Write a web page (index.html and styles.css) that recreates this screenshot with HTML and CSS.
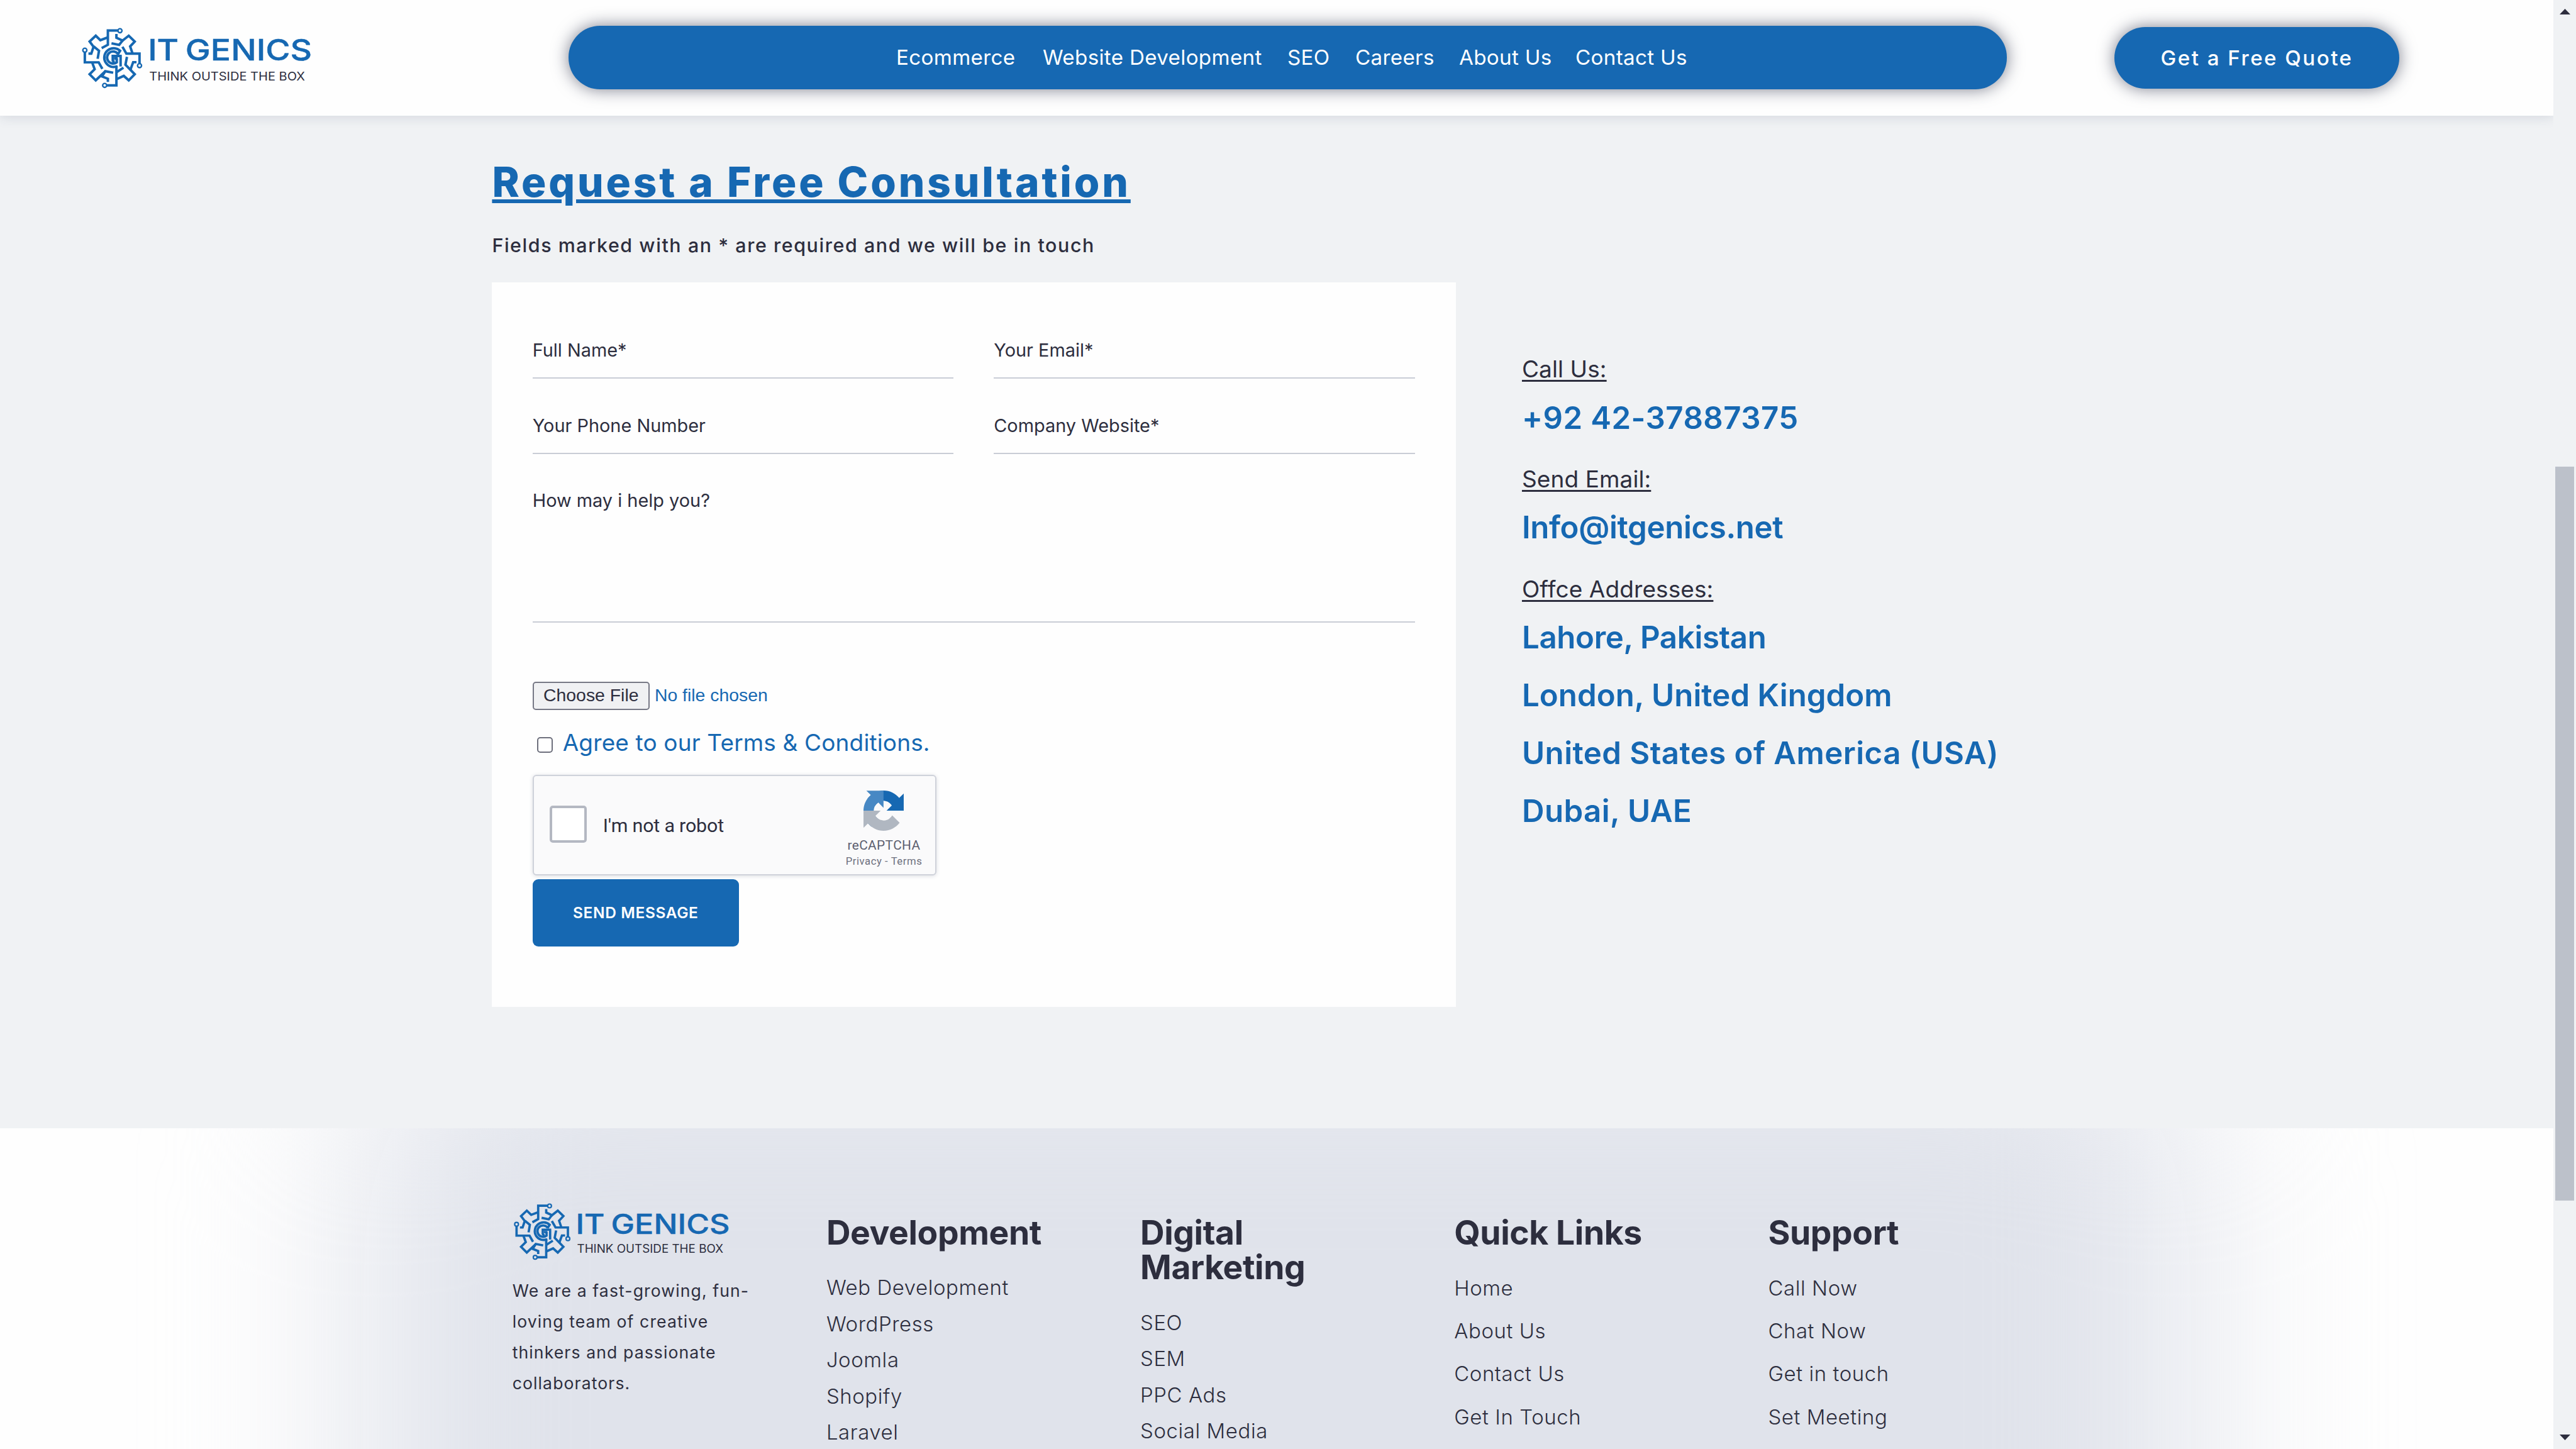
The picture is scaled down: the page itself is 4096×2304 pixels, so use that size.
FILE: index.html
```html
<!DOCTYPE html>
<html lang="en">
<head>
<meta charset="utf-8">
<title>IT Genics - Request a Free Consultation</title>
<link rel="stylesheet" href="styles.css">
</head>
<body>
<svg class="defs" aria-hidden="true">
  <symbol id="logo" class="logo" viewBox="0 0 690 184">
    <g fill="none" stroke="#1668b2" stroke-width="7.4">
      <path d="M107 8.3H77.5V51L59 61"/>
      <path d="M77.5 29L55.1 37.3L41.3 24L23 41.3L34.7 57L28 77.5H19.5"/>
      <path d="M35 56L51 69L47 93"/>
      <path d="M103 19V30L121.5 38.5L139.8 24L157.7 41.3L144 56L151.5 78"/>
      <path d="M121.5 38L111.2 51.5L88.3 46.7"/>
      <path d="M121 57L132.7 77.5H172V107"/>
      <path d="M134.5 87L130 110.5L157.7 139L139.8 157.3L125 144L105 153"/>
      <path d="M163 103H153L145 125"/>
      <path d="M124 119.5L104 132.5"/>
      <path d="M103 113V172.3H74"/>
      <path d="M93.4 134.5L69.9 130L60 145.5L77.5 152.5V162"/>
      <path d="M70 130L41.3 157.3L23 139L38 124L31 105"/>
      <path d="M8.7 74V103.5H50L61 123"/>
      <path d="M106 115A28 28 0 1 1 114 69L107 80"/>
      <path d="M108 79A18 18 0 1 0 104 103.5V92"/>
      <path d="M119 84.5H92V97Q92 101 98 101M96 92H107M115.5 84V116"/>
    </g>
    <g fill="none" stroke="#1668b2" stroke-width="4.4">
      <circle cx="113.6" cy="9" r="6"/>
      <circle cx="172" cy="113.3" r="6"/>
      <circle cx="67.9" cy="172.3" r="6"/>
      <circle cx="8.7" cy="67.3" r="6"/>
    </g>
    <g class="logo-name">
      <text x="197" y="98" textLength="92" lengthAdjust="spacingAndGlyphs">IT</text>
      <text x="309" y="98" textLength="378" lengthAdjust="spacingAndGlyphs">GENICS</text>
    </g>
    <text class="logo-tag" x="201" y="158.3" textLength="465" lengthAdjust="spacingAndGlyphs">THINK OUTSIDE THE BOX</text>
  </symbol>
</svg>

<div class="page">
  <header class="header">
    <svg class="header-logo"><use href="#logo"/></svg>
    <nav class="nav">
      <a>Ecommerce</a><a>Website Development</a><a>SEO</a><a>Careers</a><a>About Us</a><a>Contact Us</a>
    </nav>
    <a class="quote">Get a Free Quote</a>
  </header>

  <main class="consult">
    <h1 class="title">Request a Free Consultation</h1>
    <p class="subtitle">Fields marked with an * are required and we will be in touch</p>
    <div class="row">
      <form class="card">
        <div class="fields">
          <label class="field">Full Name*</label>
          <label class="field">Your Email*</label>
          <label class="field">Your Phone Number</label>
          <label class="field">Company Website*</label>
          <label class="field field-message">How may i help you?</label>
        </div>
        <div class="file"><span class="file-button">Choose File</span><span class="file-name">No file chosen</span></div>
        <label class="agree"><span class="agree-box"></span>Agree to our Terms &amp; Conditions.</label>
        <div class="captcha">
          <span class="captcha-box"></span>
          <span class="captcha-label">I'm not a robot</span>
          <div class="captcha-brand">
            <svg class="captcha-icon" viewBox="0 0 64 64">
              <path fill="#1668b2" d="M64 31.955l-.033-1.37V4.687l-7.16 7.16C50.948 4.674 42.033.093 32.05.093c-10.4 0-19.622 4.96-25.458 12.64l11.736 11.86a15.55 15.55 0 0 1 4.754-5.334c2.05-1.6 4.952-2.906 8.968-2.906.485 0 .86.057 1.135.163 4.976.393 9.288 3.14 11.828 7.124l-8.307 8.307L64 31.953"/>
              <path fill="#4788c4" d="M31.862.094l-1.37.033H4.594l7.16 7.16C4.58 13.147 0 22.06 0 32.046c0 10.4 4.96 19.622 12.64 25.458L24.5 45.768a15.55 15.55 0 0 1-5.334-4.754c-1.6-2.05-2.906-4.952-2.906-8.968 0-.485.057-.86.163-1.135.393-4.976 3.14-9.288 7.124-11.828l8.307 8.307L31.86.095"/>
              <path fill="#b0b7c1" d="M.001 32.045l.033 1.37v25.898l7.16-7.16c5.86 7.173 14.774 11.754 24.76 11.754 10.4 0 19.622-4.96 25.458-12.64l-11.736-11.86a15.55 15.55 0 0 1-4.754 5.334c-2.05 1.6-4.952 2.906-8.968 2.906-.485 0-.86-.057-1.135-.163-4.976-.393-9.288-3.14-11.828-7.124l8.307-8.307c-10.522.04-22.4.066-27.295-.005"/>
            </svg>
            <span class="captcha-name">reCAPTCHA</span>
            <span class="captcha-links">Privacy - Terms</span>
          </div>
        </div>
        <a class="send">SEND MESSAGE</a>
      </form>
      <aside class="contact">
        <p class="contact-label">Call Us:</p>
        <p class="contact-value">+92 42-37887375</p>
        <p class="contact-label">Send Email:</p>
        <p class="contact-value tight">Info@itgenics.net</p>
        <p class="contact-label">Offce Addresses:</p>
        <p class="contact-value tight">Lahore, Pakistan</p>
        <p class="contact-value snug">London, United Kingdom</p>
        <p class="contact-value">United States of America (USA)</p>
        <p class="contact-value">Dubai, UAE</p>
      </aside>
    </div>
  </main>

  <footer class="footer">
    <div class="col">
      <svg class="footer-logo"><use href="#logo"/></svg>
      <p class="about">We are a fast-growing, fun-<br>loving team of creative<br>thinkers and passionate<br>collaborators.</p>
    </div>
    <div class="col">
      <h2 class="col-title">Development</h2>
      <ul class="links"><li>Web Development</li><li>WordPress</li><li>Joomla</li><li>Shopify</li><li>Laravel</li></ul>
    </div>
    <div class="col">
      <h2 class="col-title">Digital<br>Marketing</h2>
      <ul class="links"><li>SEO</li><li>SEM</li><li>PPC Ads</li><li>Social Media</li></ul>
    </div>
    <div class="col">
      <h2 class="col-title">Quick Links</h2>
      <ul class="links links-wide"><li>Home</li><li>About Us</li><li>Contact Us</li><li>Get In Touch</li></ul>
    </div>
    <div class="col">
      <h2 class="col-title">Support</h2>
      <ul class="links links-wide"><li>Call Now</li><li>Chat Now</li><li>Get in touch</li><li>Set Meeting</li></ul>
    </div>
  </footer>
</div>

<div class="scrollbar">
  <svg class="arrow" viewBox="0 0 17 9"><path d="M8.5 0L17 9H0Z"/></svg>
  <div class="thumb"></div>
  <svg class="arrow arrow-down" viewBox="0 0 17 9"><path d="M0 0H17L8.5 9Z"/></svg>
</div>
</body>
</html>
```

FILE: styles.css
```css
* { box-sizing: border-box; margin: 0; padding: 0; }
body {
  display: flex;
  width: 4096px;
  height: 2304px;
  overflow: hidden;
  font-family: "Inter", sans-serif;
  color: #2d2e3e;
  background: #fefefe;
}
.defs { position: absolute; width: 0; height: 0; }
.logo, .header-logo, .footer-logo { overflow: visible; }
.logo-name { font: 500 86.6px "Inter", sans-serif; fill: #1668b2; stroke: #1668b2; stroke-width: .8; }
.logo-tag { font: 400 36px "Inter", sans-serif; fill: #2d2e3e; }

.page { width: 4060px; height: 2304px; display: flex; flex-direction: column; overflow: hidden; }

/* header */
.header {
  position: relative;
  z-index: 1;
  flex: none;
  display: flex;
  align-items: center;
  height: 183.5px;
  padding-left: 129.8px;
  background: #fefefe;
  box-shadow: 0 2px 18px rgba(50, 60, 100, .15);
}
.header-logo { width: 368px; height: 98px; flex: none; margin-top: 2px; }
.nav {
  flex: none;
  display: grid;
  grid-template-columns: 233px 389px 108px 165px 185px auto;
  align-items: center;
  width: 2286.5px;
  height: 101px;
  margin-left: 406.7px;
  padding: 0 0 2px 520.5px;
  border-radius: 50px;
  background: #1668b2;
  box-shadow: 0 0 27px rgba(35, 40, 65, .6);
  color: #fff;
  font-size: 33.2px;
  letter-spacing: .32px;
  white-space: nowrap;
}
.quote {
  flex: none;
  width: 453.5px;
  height: 98px;
  margin-left: 171px;
  padding-left: 73.5px;
  border-radius: 49px;
  background: #1668b2;
  box-shadow: 0 0 27px rgba(35, 40, 65, .6);
  color: #fff;
  font-size: 33.2px;
  font-weight: 500;
  line-height: 98px;
  letter-spacing: 2.45px;
}

/* consultation */
.consult { flex: none; height: 1610.2px; padding: 65.5px 0 0 782.4px; background: #f0f2f4; }
.title {
  width: max-content;
  font-size: 65.6px;
  font-weight: 800;
  line-height: 80px;
  letter-spacing: 3.87px;
  color: #1668b2;
  text-decoration: underline;
  text-decoration-thickness: 6px;
  text-underline-offset: 4px;
}
.subtitle { margin: 41px 0 39.2px; font-size: 30.4px; font-weight: 500; line-height: 40px; letter-spacing: 1.58px; }
.row { display: flex; gap: 105.4px; }
.card { width: 1532.2px; height: 1152.3px; padding: 89.8px 64.8px 0 64.3px; background: #fefefe; }
.fields { display: grid; grid-template-columns: 1fr 1fr; gap: 56.6px 64px; }
.field { height: 63px; border-bottom: 2px solid #c9cdd6; font-size: 28.9px; line-height: 36px; }
.field-message { grid-column: 1 / 3; height: 212px; }
.file { display: flex; align-items: center; gap: 8px; margin-top: 93.8px; font: 28.4px "Liberation Sans", Arial, sans-serif; }
.file-button {
  width: 186.2px;
  height: 45.2px;
  border: 2px solid #767885;
  border-radius: 5px;
  background: #f0f1f3;
  line-height: 39px;
  text-align: center;
}
.file-name { padding-bottom: 2px; color: #1668b2; }
.agree { display: flex; align-items: center; gap: 15.5px; margin: 29.3px 0 27.5px 7px; font-size: 37px; line-height: 46px; letter-spacing: .14px; color: #1668b2; }
.agree-box { width: 25.5px; height: 25.5px; margin-top: 6px; border: 2px solid #6d6f7c; border-radius: 5px; background: #fff; }
.captcha {
  display: flex;
  align-items: center;
  width: 642.8px;
  height: 159.6px;
  padding: 0 17px 0 25.1px;
  border: 2px solid #cfd2da;
  border-radius: 6px;
  background: #fafafb;
  box-shadow: 0 1px 6px rgba(60, 70, 100, .18);
  font-family: "Roboto", sans-serif;
}
.captcha-box { width: 59.5px; height: 59.5px; margin-bottom: 3px; border: 4.5px solid #b4b8c2; border-radius: 5px; background: #fff; }
.captcha-label { flex: 1; margin-left: 25.5px; padding-top: 2px; font-size: 30.4px; letter-spacing: -.18px; }
.captcha-brand { display: flex; flex-direction: column; align-items: center; align-self: flex-start; width: 130px; padding-top: 23.5px; }
.captcha-icon { width: 64px; height: 64px; }
.captcha-name { margin-top: 10.4px; font-size: 20.8px; line-height: 24px; letter-spacing: .4px; color: #5d6070; }
.captcha-links { margin-top: 4.3px; font-size: 16.7px; line-height: 20px; letter-spacing: .55px; color: #6d707e; }
.send {
  display: block;
  width: 328.2px;
  height: 106.3px;
  margin-top: 6.8px;
  border-radius: 9px;
  background: #1668b2;
  color: #fff;
  font-size: 24.5px;
  font-weight: 600;
  line-height: 107px;
  letter-spacing: .6px;
  text-align: center;
}

/* contact */
.contact { padding-top: 114px; }
.contact-label {
  width: max-content;
  font-size: 37px;
  line-height: 48px;
  letter-spacing: .1px;
  text-decoration: underline;
  text-decoration-thickness: 2.6px;
  text-underline-offset: 3.6px;
  text-decoration-skip-ink: none;
}
.contact-value { font-size: 49.2px; font-weight: 600; line-height: 60px; letter-spacing: .44px; color: #1668b2; white-space: nowrap; }
.contact-value.tight { letter-spacing: -.35px; }
.contact-value.snug { letter-spacing: .05px; }
.contact-label + .contact-value { margin-top: 22.5px; }
.contact-value + .contact-label { margin-top: 44.2px; }
.contact-value + .contact-value { margin-top: 31.9px; }

/* footer */
.footer {
  position: relative;
  flex: 1;
  display: grid;
  grid-template-columns: repeat(5, 499.2px);
  padding: 119.5px 0 0 814.7px;
  overflow: hidden;
  background: #fefefe;
}
.footer::before {
  content: "";
  position: absolute;
  left: 576px;
  top: -170px;
  width: 2908px;
  height: 1600px;
  border-radius: 220px;
  background: #e0e3eb;
  filter: blur(150px);
}
.col { position: relative; white-space: nowrap; }
.footer-logo { display: block; width: 345px; height: 92px; margin-left: 2.4px; }
.about { margin-top: 23.3px; font-size: 26.6px; line-height: 49px; letter-spacing: 1.1px; }
.col-title { margin-top: 18.4px; font-size: 53.4px; font-weight: 700; line-height: 55.6px; letter-spacing: -.4px; }
.links { margin-top: 31.8px; list-style: none; font-size: 32.9px; font-weight: 300; line-height: 57.6px; letter-spacing: .6px; }
.links-wide { margin-top: 26.4px; line-height: 68.4px; }

/* scrollbar */
.scrollbar { flex: none; display: flex; flex-direction: column; align-items: center; width: 36px; height: 2304px; padding: 14px 0; background: #f0f2f4; }
.arrow { width: 17px; height: 9px; flex: none; fill: #2d2e3e; }
.thumb { width: 30.5px; height: 1167px; margin-top: 719px; background: #bcc1ca; }
.arrow-down { margin-top: auto; }
```
